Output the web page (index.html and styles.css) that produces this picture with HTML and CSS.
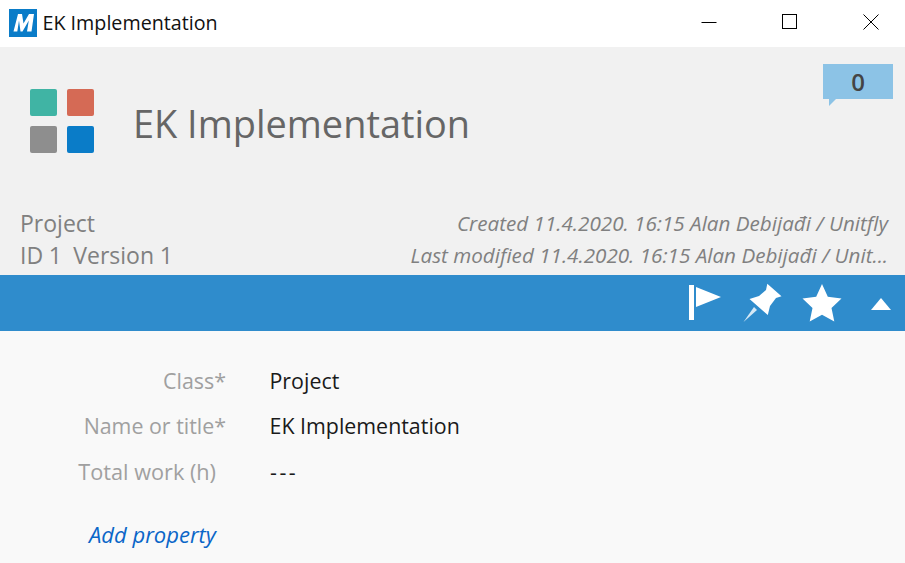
FILE: index.html
```html
<!DOCTYPE html>
<html lang="en">
<head>
<meta charset="utf-8">
<title>EK Implementation</title>
<link rel="stylesheet" href="styles.css">
</head>
<body>
<div class="window">
  <header class="titlebar">
    <div class="app-logo"><svg width="28" height="28" viewBox="0 0 28 28"><rect width="28" height="28" fill="#0a7cc8"/><path d="M4.500 22.500 L9 5 H13 L14.500 14.500 L20 5 H25 L22.500 22.500 H18 L19.800 11.500 L13.500 22.500 H11.500 L10 11.500 L8.300 22.500Z" fill="#fff"/></svg></div>
    <span class="window-title">EK Implementation</span>
    <div class="window-controls">
      <svg width="16" height="16" viewBox="0 0 16 16"><path d="M0.500 8.500 H15.500" stroke="#000" fill="none"/></svg>
      <svg width="16" height="16" viewBox="0 0 16 16"><rect x="0.500" y="0.500" width="14" height="14" stroke="#000" fill="none"/></svg>
      <svg width="16" height="16" viewBox="0 0 16 16"><path d="M0.500 0.500 L15.500 15.500 M15.500 0.500 L0.500 15.500" stroke="#000" fill="none"/></svg>
    </div>
  </header>
  <section class="header">
    <div class="bubble"><span class="bubble-count">0</span></div>
    <div class="header-main">
      <div class="tiles">
        <span class="tile tile-teal"></span><span class="tile tile-red"></span>
        <span class="tile tile-grey"></span><span class="tile tile-blue"></span>
      </div>
      <h1 class="object-title">EK Implementation</h1>
    </div>
    <div class="meta">
      <div class="meta-left">
        <div>Project</div>
        <div class="meta-id">ID 1&nbsp; Version 1</div>
      </div>
      <div class="meta-right">
        <div>Created 11.4.2020. 16:15 Alan Debijađi / Unitfly</div>
        <div>Last modified 11.4.2020. 16:15 Alan Debijađi / Unit...</div>
      </div>
    </div>
  </section>
  <nav class="toolbar">
    <svg class="ic ic-flag" width="34" height="36" viewBox="0 0 34 36"><rect x="1" y="0" width="5" height="35" fill="#fff"/><path d="M8 2 L33 12 L8 22Z" fill="#fff"/></svg>
    <svg class="ic ic-pin" width="40" height="40" viewBox="0 0 40 40"><path d="M11 24 L14 27 L0.500 39Z" fill="#fff" opacity="0.800"/><path d="M24.300 0.700 L38.500 13.300 L33 15 L27 23 L24.800 32 L6.500 16 L16 13 L23 7Z" fill="#fff"/></svg>
    <svg class="ic ic-star" width="40" height="38" viewBox="0 0 40 38"><path d="M20 0 L25.800 12.800 L39.500 14.500 L29.500 24 L32.300 37.500 L20 30.700 L7.700 37.500 L10.500 24 L0.500 14.500 L14.200 12.800Z" fill="#fff"/></svg>
    <svg class="ic ic-caret" width="20" height="12" viewBox="0 0 20 12"><path d="M10 0 L20 12 H0Z" fill="#fff"/></svg>
  </nav>
  <main class="props">
    <div class="prop"><span class="prop-label">Class*</span><span class="prop-value">Project</span></div>
    <div class="prop"><span class="prop-label">Name or title*</span><span class="prop-value">EK Implementation</span></div>
    <div class="prop prop-plain"><span class="prop-label">Total work (h)</span><span class="prop-value prop-empty">---</span></div>
    <a class="add-prop" href="#">Add property</a>
  </main>
</div>
</body>
</html>
```
FILE: styles.css
```css
* { box-sizing: border-box; }
html, body { margin: 0; padding: 0; }
body { font-family: "Open Sans", "Noto Sans", sans-serif; background: #fff; }
.window { width: 905px; height: 563px; display: flex; flex-direction: column; overflow: hidden; }

.titlebar { height: 47px; flex: none; display: flex; align-items: center; padding-left: 9px; background: #fff; }
.app-logo { width: 28px; height: 28px; margin-right: 5.500px; margin-top: -1px; }
.app-logo svg { display: block; }
.window-title { font-size: 19.700px; color: #111; margin-top: -3px; }
.window-controls { margin-left: auto; display: flex; gap: 65px; padding-right: 26.500px; margin-top: -3px; }
.window-controls svg { display: block; }

.header { height: 228px; flex: none; background: #f1f1f1; position: relative; display: flex; flex-direction: column; }
.bubble { position: absolute; left: 823px; top: 17px; width: 70px; height: 35px; background: #8cc3e6; text-align: center; }
.bubble::after { content: ""; position: absolute; left: 6px; top: 35px; border-top: 7px solid #8cc3e6; border-right: 7px solid transparent; }
.bubble-count { font-size: 24px; line-height: 35px; color: #444; font-weight: 600; }

.header-main { display: flex; align-items: center; padding: 42px 0 0 30px; }
.tiles { display: grid; grid-template-columns: 27px 27px; grid-auto-rows: 27px; gap: 10px; width: 64px; }
.tile { border-radius: 2px; display: block; }
.tile-teal { background: #40b4a4; }
.tile-red { background: #d56a55; }
.tile-grey { background: #8e8e8e; }
.tile-blue { background: #0a7cc8; }
.object-title { margin: 4px 0 0 39px; font-weight: 400; font-size: 37.900px; line-height: 52px; color: #666; }

.meta { margin-top: auto; display: flex; justify-content: space-between; padding: 0 17px 3px 20px; }
.meta-left { font-size: 23px; line-height: 32px; color: #808080; padding-bottom: 1px; }
.meta-id { word-spacing: -0.300px; }
.meta-right { font-size: 20.650px; line-height: 32px; color: #808080; font-style: italic; text-align: right; }

.toolbar { height: 56px; flex: none; background: #2f8ccc; display: flex; align-items: center; padding-right: 14px; justify-content: flex-end; }
.ic { filter: blur(0.400px); }
.ic-flag { margin-right: 21px; }
.ic-pin { margin-right: 19px; }
.ic-star { margin-right: 29px; }
.ic-caret { margin-top: 1px; }

.props { flex: 1; background: #f9f9f9; padding-top: 27px; }
.prop { display: flex; height: 45px; font-size: 21.400px; line-height: 45px; }
.prop-label { width: 226px; text-align: right; color: #a0a0a0; }
.prop-value { margin-left: 43.500px; color: #1a1a1a; }
.prop-plain { margin-top: 1px; }
.prop-plain .prop-label { width: 216px; font-size: 21.700px; }
.prop-plain .prop-value { margin-left: 54px; }
.prop-empty { letter-spacing: 2.500px; }
.add-prop { display: block; margin: 25px 0 0 89px; font-size: 22px; font-style: italic; color: #0a66c8; text-decoration: none; }
```
